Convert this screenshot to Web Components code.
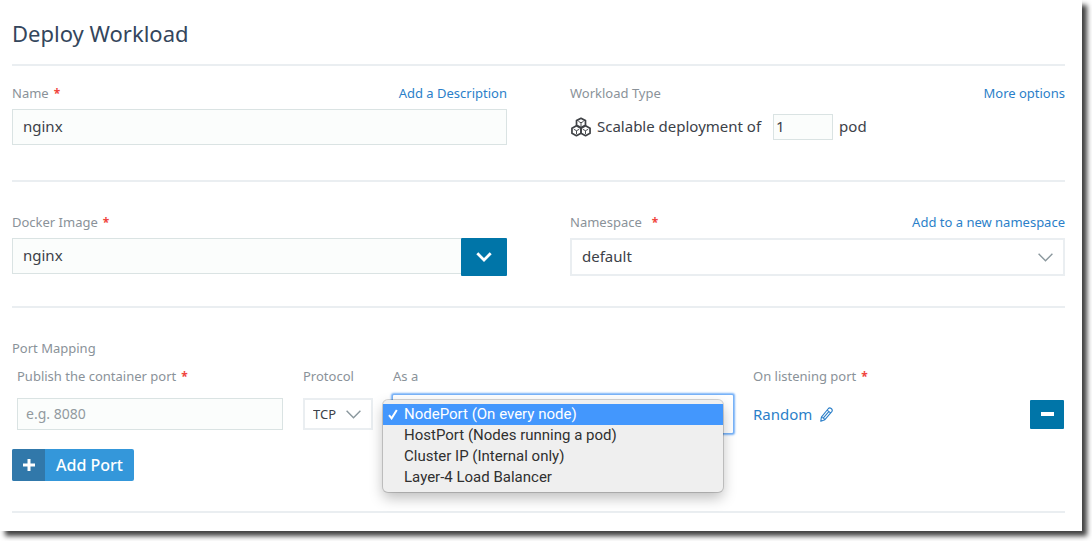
<!DOCTYPE html>
<html lang="en">
<head>
<meta charset="utf-8">
<meta name="viewport" content="width=device-width, initial-scale=1">
<title>Deploy Workload</title>
<style>
  :root {
    --text: #3c4148;
    --muted: #8a9299;
    --link: #2b7fc9;
    --primary: #0075a8;
    --line: #eaeef1;
    --field-line: #dae3e3;
    --field-bg: #fbfdfc;
    --required: #f0443e;
  }
  body {
    margin: 0;
    padding: 0 10px 10px 0;
    background: #fff;
    color: var(--text);
    font: 15px/20px "Noto Sans", "Open Sans", sans-serif;
  }
</style>
</head>
<body>
<deploy-card>
  <page-title>Deploy Workload</page-title>
  <form-section class="first">
    <text-field label="Name" required action="Add a Description" value="nginx"></text-field>
    <workload-type></workload-type>
  </form-section>
  <form-section>
    <image-field></image-field>
    <namespace-field></namespace-field>
  </form-section>
  <port-mapping>
    <text-field class="compact" label="Publish the container port" required placeholder="e.g. 8080"></text-field>
    <protocol-field></protocol-field>
    <kind-field></kind-field>
    <listening-port></listening-port>
    <remove-button></remove-button>
  </port-mapping>
</deploy-card>

<script>
const shared = `
  * { box-sizing: border-box; }
  :host { display: block; min-width: 0; }
  .head { display: flex; justify-content: space-between; gap: 12px; margin-bottom: 6px; font-size: 13px; line-height: 20px; white-space: nowrap; }
  .label, label { color: var(--muted); }
  .req { color: var(--required); font-size: 12px; line-height: 12px; font-weight: 700; margin-left: 5px; }
  a { color: var(--link); text-decoration: none; }
  input, select, button { font: inherit; color: inherit; margin: 0; border-radius: 0; }
  input, select { display: block; width: 100%; min-width: 0; }
  input { height: 36px; padding: 0 10px 2px; border: 1px solid var(--field-line); background: var(--field-bg); outline: 0; }
  select { appearance: none; height: 38px; padding: 0 30px 2px 10px; border: 2px solid var(--line); background: #fff; outline: 0; }
  button { display: flex; align-items: center; justify-content: center; padding: 0; border: 0; background: var(--primary); color: #fff; cursor: pointer; }
  svg { display: block; flex: none; }
  .pick { display: grid; align-items: center; }
  .pick > select, .pick > svg { grid-area: 1 / 1; }
  .pick > svg { justify-self: end; margin-right: 12px; pointer-events: none; }
  .port-head { margin-bottom: 9px; }
  .slot { display: flex; align-items: center; height: 38px; }
`;
const chevron = `<svg width="15" height="9" viewBox="0 0 15 9" fill="none" stroke="#8a979d" stroke-width="1.4" aria-hidden="true"><path d="M.6.8 7.5 7.8 14.4.8"/></svg>`;

function define(name, render) {
  customElements.define(name, class extends HTMLElement {
    connectedCallback() {
      if (this.shadowRoot) return;
      const tpl = document.createElement('template');
      tpl.innerHTML = `<style>${shared}</style>` + render(this);
      this.attachShadow({ mode: 'open' }).append(tpl.content.cloneNode(true));
    }
  });
}

define('deploy-card', () => `
  <style>:host { padding: 0 17px 18px 12px; background: #fff; box-shadow: 5px 5px 5px rgba(0,0,0,.75); }</style>
  <slot></slot>`);

define('page-title', () => `
  <style>
    :host { padding: 19px 0 17px; border-bottom: 2px solid var(--line); }
    h1 { margin: 0; font-size: 22px; line-height: 28px; font-weight: 400; color: #34465c; }
  </style>
  <h1><slot></slot></h1>`);

define('form-section', () => `
  <style>
    :host { display: grid; grid-template-columns: 1fr 1fr; gap: 63px; padding: 30px 0; border-bottom: 2px solid var(--line); }
    :host(.first) { padding: 17px 0 35px; }
  </style>
  <slot></slot>`);

define('text-field', el => {
  const a = n => el.getAttribute(n) || '';
  return `
  <style>
    :host(.compact) .head { margin-bottom: 9px; }
    :host(.compact) .box { display: flex; align-items: center; height: 38px; }
    :host(.compact) input { height: 32px; padding: 0 8px 2px; font-size: 14px; }
    input::placeholder { color: #929a9f; opacity: 1; }
  </style>
  <div class="head">
    <label for="f">${a('label')}${el.hasAttribute('required') ? '<span class="req">*</span>' : ''}</label>
    ${a('action') ? `<a href="#">${a('action')}</a>` : ''}
  </div>
  <div class="box"><input id="f" type="text" value="${a('value')}" placeholder="${a('placeholder')}"></div>`;
});

define('workload-type', () => `
  <style>
    .row { display: flex; align-items: center; gap: 6px; height: 36px; padding-left: 1px; white-space: nowrap; }
    .row label { color: inherit; padding: 0 6px 2px 0; }
    .row span { padding-bottom: 2px; }
    input { width: 60px; height: 26px; padding: 0 2px 2px; }
  </style>
  <div class="head"><span class="label">Workload Type</span><a href="#">More options</a></div>
  <div class="row">
    <svg width="20" height="20" viewBox="0 0 21 20" fill="none" stroke="#3f4246" stroke-linejoin="round" aria-hidden="true">
      <g stroke-width="1.8">
        <path d="M10.5 .9 15.2 3.3V8.2L10.5 10.6 5.8 8.2V3.3z"/>
        <path d="M5.7 8.6 10.5 11.2V16.6L5.7 19.1 1 16.6V11.2z"/>
        <path d="M15.3 8.6 20 11.2V16.6L15.3 19.1 10.5 16.6V11.2z"/>
      </g>
      <path stroke-width="1" d="M7.8 4.1 10.5 5.6 13.2 4.1M10.5 5.6V9M3 12.4 5.8 13.9 8.6 12.4M5.8 13.9V17.4M12.4 12.4 15.2 13.9 18 12.4M15.2 13.9V17.4"/>
    </svg>
    <label for="n">Scalable deployment of</label>
    <input id="n" type="text" inputmode="numeric" value="1">
    <span>pod</span>
  </div>`);

define('image-field', () => `
  <style>
    .row { display: flex; align-items: flex-start; }
    input { flex: 1; border-right: 0; }
    button { width: 46px; height: 38px; border-radius: 1px; }
  </style>
  <div class="head"><label for="i">Docker Image<span class="req">*</span></label></div>
  <div class="row">
    <input id="i" type="text" value="nginx">
    <button type="button" aria-label="Show images"><svg width="16" height="10" viewBox="0 0 16 10" fill="none" stroke="#fff" stroke-width="2.8" aria-hidden="true"><path d="M1.3 1.3 8 8 14.7 1.3"/></svg></button>
  </div>`);

define('namespace-field', () => `
  <style>.req { margin-left: 10px; }</style>
  <div class="head"><label for="s">Namespace<span class="req">*</span></label><a href="#">Add to a new namespace</a></div>
  <div class="pick"><select id="s"><option>default</option></select>${chevron}</div>`);

define('port-mapping', () => `
  <style>
    :host { padding: 30px 0; border-bottom: 2px solid var(--line); }
    .title { margin-bottom: 8px; }
    .ports { display: grid; grid-template-columns: 266fr 70px 340fr 257fr 34px; gap: 20px; align-items: end; padding: 0 1px 0 5px; }
    .add { margin-top: 16px; height: 32px; border-radius: 2px; overflow: hidden; background: #3497da; font-size: 16px; font-weight: 500; }
    .plus { display: flex; align-items: center; justify-content: center; width: 33px; height: 100%; background: #3178aa; }
    .text { padding: 0 11px; }
  </style>
  <div class="head title"><span class="label">Port Mapping</span></div>
  <div class="ports"><slot></slot></div>
  <button class="add" type="button"><span class="plus"><svg width="12" height="12" viewBox="0 0 12 12" fill="none" stroke="#fff" stroke-width="3" aria-hidden="true"><path d="M0 6H12M6 0V12"/></svg></span><span class="text">Add Port</span></button>`);

define('protocol-field', () => `
  <style>select { height: 32px; padding: 0 26px 0 8px; font-size: 13px; } .pick { width: 100%; }</style>
  <div class="head port-head"><label for="p">Protocol</label></div>
  <div class="slot"><div class="pick"><select id="p"><option>TCP</option></select>${chevron}</div></div>`);

define('kind-field', () => {
  const kinds = ['NodePort (On every node)', 'HostPort (Nodes running a pod)', 'Cluster IP (Internal only)', 'Layer-4 Load Balancer'];
  return `
  <style>
    .anchor { position: relative; }
    select { border-color: #fff; box-shadow: 0 0 0 1px #79b3f8, 0 0 2px 2px #79b3f8; border-radius: 1px; }
    ul { position: absolute; top: 5px; left: -10px; width: 100%; margin: 0; padding: 4px 0; list-style: none;
      background: #efefef; border-radius: 5px; box-shadow: 0 0 0 1px rgba(0,0,0,.16), 0 6px 14px rgba(0,0,0,.26);
      font: 15px/21px Roboto, sans-serif; color: #303030; white-space: nowrap; }
    li { display: flex; align-items: center; padding-left: 5px; }
    li::before { content: ""; width: 16px; flex: none; }
    li[aria-selected=true] { background: #4397fd; color: #fff; }
    li[aria-selected=true]::before { content: none; }
    li svg { margin-right: 6px; }
  </style>
  <div class="head port-head"><label for="k">As a</label></div>
  <div class="anchor">
    <div class="pick"><select id="k">${kinds.map(k => `<option>${k}</option>`).join('')}</select>${chevron}</div>
    <ul role="listbox" aria-label="As a">${kinds.map((k, i) => i
      ? `<li role="option" aria-selected="false">${k}</li>`
      : `<li role="option" aria-selected="true"><svg width="10" height="11" viewBox="0 0 10 11" fill="none" stroke="#fff" stroke-width="2" aria-hidden="true"><path d="M1 6.2 3.6 9.4 8.8 1"/></svg>${k}</li>`).join('')}</ul>
  </div>`;
});

define('listening-port', () => `
  <style>a { display: flex; align-items: center; gap: 8px; }</style>
  <div class="head port-head"><span class="label">On listening port<span class="req">*</span></span></div>
  <div class="slot"><a href="#">Random
    <svg width="13" height="15" viewBox="0 0 13 15" fill="none" stroke="#2b7fc9" stroke-width="1.1" stroke-linejoin="round" aria-hidden="true">
      <path d="M.8 14.2 1.4 10.2 8.4 1.5Q9.6.3 11.2 1.5T12 4.3L4.9 12.7zM1.4 10.2Q3.7 10.4 4.9 12.7M7.1 3.1 10.6 5.9M3.6 10.6 8.8 4.6"/></svg></a></div>`);

define('remove-button', () => `
  <style>button { width: 34px; height: 29px; border-radius: 1px; }</style>
  <div class="slot"><button type="button" aria-label="Remove port"><svg width="13" height="4" viewBox="0 0 13 4" aria-hidden="true"><path fill="#fff" d="M0 0H13V4H0z"/></svg></button></div>`);
</script>
</body>
</html>
